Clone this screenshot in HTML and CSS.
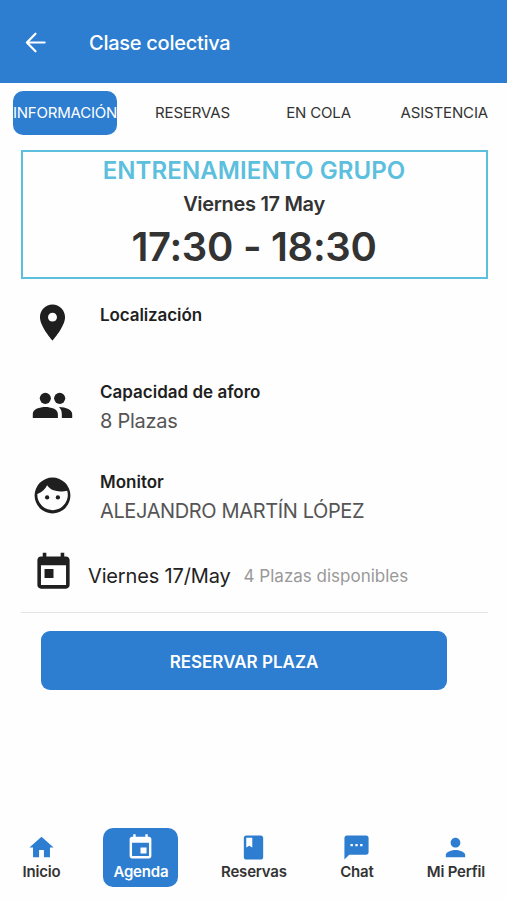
FILE: index.html
```html
<!DOCTYPE html>
<html lang="es">
<head>
<meta charset="utf-8">
<meta name="viewport" content="width=device-width, initial-scale=1">
<title>Clase colectiva</title>
<link rel="stylesheet" href="styles.css">
</head>
<body>
<header class="topbar">
  <svg class="back" viewBox="0 0 24 24"><path d="M21.500 12H3.500M12 2.800 3 12l9 9.200" /></svg>
  <h1 class="title">Clase colectiva</h1>
</header>
<nav class="tabs">
  <a class="tab tab-active"><span>INFORMACIÓN</span></a>
  <a class="tab"><span>RESERVAS</span></a>
  <a class="tab"><span>EN COLA</span></a>
  <a class="tab"><span>ASISTENCIA</span></a>
</nav>
<main class="content">
  <section class="session">
    <h2 class="name">ENTRENAMIENTO GRUPO</h2>
    <p class="date">Viernes 17 May</p>
    <p class="time">17:30 - 18:30</p>
  </section>
  <section class="row row-place">
    <svg class="icon" viewBox="0 0 24 24"><path d="M12 2C8.130 2 5 5.130 5 9c0 5.250 7 13 7 13s7-7.750 7-13c0-3.870-3.130-7-7-7zm0 9.500c-1.380 0-2.500-1.120-2.500-2.500s1.120-2.500 2.500-2.500 2.500 1.120 2.500 2.500-1.120 2.500-2.500 2.500z"/></svg>
    <div><h3 class="label">Localización</h3></div>
  </section>
  <section class="row row-capacity">
    <svg class="icon" viewBox="0 0 24 24"><circle cx="8" cy="8" r="3.100"/><circle cx="16" cy="8" r="3.100"/><path d="M1 19v-2.200C1 14 5 12.900 8 12.900s7 1.100 7 3.900V19zM15.600 12.800c4 .1 7.400 1.500 7.400 4V19h-5.800v-2c0-1.800-.4-3-1.600-4.200z"/></svg>
    <div><h3 class="label">Capacidad de aforo</h3><p class="value">8 Plazas</p></div>
  </section>
  <section class="row row-coach">
    <svg class="icon" viewBox="0 0 24 24"><path fill-rule="evenodd" d="M12 2a10 10 0 1 0 0 20 10 10 0 0 0 0-20zM9 6.300C10.600 8.800 13.500 9.700 16.500 9.700c1.300 0 2.800-.1 3.700-.4A8.500 8.500 0 1 1 3.550 11.200C6 10.200 8 8.500 9 6.300z"/><circle cx="9" cy="13.100" r="1.200"/><circle cx="15" cy="13.100" r="1.200"/></svg>
    <div><h3 class="label">Monitor</h3><p class="value coach-name">ALEJANDRO MARTÍN LÓPEZ</p></div>
  </section>
  <section class="day">
    <svg class="icon" viewBox="0 0 24 24"><path d="M19 3h-1V1h-2v2H8V1H6v2H5c-1.110 0-1.990.9-1.990 2L3 19c0 1.100.89 2 2 2h14c1.100 0 2-.9 2-2V5c0-1.100-.9-2-2-2zm0 16H5V8h14v11zM7 10h5v5H7z"/></svg>
    <span class="day-name">Viernes 17/May</span>
    <span class="free">4 Plazas disponibles</span>
  </section>
  <button class="reserve">RESERVAR PLAZA</button>
</main>
<footer class="bottom">
  <a class="item"><svg viewBox="0 0 24 24"><path d="M10 20v-6h4v6h5v-8h3L12 3 2 12h3v8z"/></svg><span>Inicio</span></a>
  <a class="item item-active"><svg viewBox="0 0 24 24"><path d="M17 12h-5v5h5v-5zM16 1v2H8V1H6v2H5c-1.110 0-1.990.9-1.990 2L3 19c0 1.100.89 2 2 2h14c1.100 0 2-.9 2-2V5c0-1.100-.9-2-2-2h-1V1h-2zm3 18H5V8h14v11z"/></svg><span>Agenda</span></a>
  <a class="item"><svg viewBox="0 0 24 24"><path d="M18 2H6c-1.100 0-2 .9-2 2v16c0 1.100.9 2 2 2h12c1.100 0 2-.9 2-2V4c0-1.100-.9-2-2-2zM6 4h5v8l-2.500-1.500L6 12V4z"/></svg><span>Reservas</span></a>
  <a class="item"><svg viewBox="0 0 24 24"><path d="M20 2H4c-1.100 0-1.990.9-1.990 2L2 22l4-4h14c1.100 0 2-.9 2-2V4c0-1.100-.9-2-2-2zM9 11H7V9h2v2zm4 0h-2V9h2v2zm4 0h-2V9h2v2z"/></svg><span>Chat</span></a>
  <a class="item"><svg viewBox="0 0 24 24"><path d="M12 12c2.210 0 4-1.790 4-4s-1.790-4-4-4-4 1.790-4 4 1.790 4 4 4zm0 2c-2.670 0-8 1.340-8 4v2h16v-2c0-2.660-5.330-4-8-4z"/></svg><span>Mi Perfil</span></a>
</footer>
</body>
</html>
```
FILE: styles.css
```css
* { box-sizing: border-box; margin: 0; padding: 0; }
body {
  height: 900px;
  display: flex;
  flex-direction: column;
  background: #fefefe;
  color: #333;
  font-family: Inter, "Liberation Sans", sans-serif;
  overflow: hidden;
}
span, h1, h2, p, button { white-space: nowrap; }

.topbar {
  height: 82.5px;
  flex: none;
  display: flex;
  align-items: center;
  padding: 3px 0 0 24px;
  background: #2d7dd0;
  color: #fff;
}
.back { width: 23px; height: 23px; margin-right: 42px; fill: none; stroke: #fff; stroke-width: 2.3; stroke-linecap: round; stroke-linejoin: round; }
.title { font-size: 20px; font-weight: 500; line-height: 24px; letter-spacing: -0.27px; }

.tabs {
  display: grid;
  grid-template-columns: 104px 151px 101px 150px;
  margin: 8.5px 0 0 13px;
  height: 44px;
  flex: none;
}
.tab { display: flex; align-items: center; justify-content: center; font-size: 15px; letter-spacing: -0.15px; color: #333; padding-bottom: 1px; }
.tab:last-child { justify-content: flex-start; padding-left: 31.5px; }
.tab-active { background: #2d7dd0; color: #fff; border-radius: 10px; letter-spacing: -0.22px; }

.content { flex: 1; padding: 15px 19.5px 0 20.5px; }
.session { height: 129px; border: 2px solid #5bbfdd; text-align: center; padding-top: 4px; }
.name { font-size: 24px; line-height: 30px; font-weight: 600; color: #5bbfdd; letter-spacing: 0.1px; }
.date { font-size: 20px; line-height: 26px; font-weight: 600; margin-top: 5px; letter-spacing: -0.32px; }
.time { font-size: 40px; line-height: 50px; font-weight: 600; margin-top: 5px; letter-spacing: -0.3px; }

.icon { width: 43px; height: 43px; flex: none; fill: #1f1f1f; }
.row { display: flex; padding-left: 10.5px; gap: 26px; }
.row-place { margin-top: 22px; height: 80px; }
.row-capacity { height: 90px; }
.row-capacity .icon { margin-top: 3px; }
.row-coach { height: 77px; }
.row-coach .icon { margin-top: 3px; }
.row-place .label { padding-top: 3px; letter-spacing: -0.1px; }
.label { font-size: 17px; line-height: 22px; font-weight: 600; color: #1f1f1f; }
.value { font-size: 20px; line-height: 26px; margin-top: 4.5px; font-weight: 400; color: #555; letter-spacing: -0.28px; }
.coach-name { letter-spacing: -0.37px; margin-top: 5px; }
.day { display: flex; align-items: center; height: 64.5px; border-bottom: 1px solid #e4e4e4; padding: 0 0 15px 11.5px; }
.day-name { font-size: 20px; letter-spacing: -0.15px; margin: 7px 0 0 13px; color: #222; }
.free { font-size: 17px; margin: 8px 0 0 13px; color: #999; }
.reserve {
  display: block;
  width: 406px;
  height: 59px;
  margin: 18.5px 0 0 20.5px;
  border: 0;
  border-radius: 9px;
  background: #2d7dd0;
  color: #fff;
  font: 600 17px Inter, sans-serif;
  padding-top: 3px;
}

.bottom {
  display: flex;
  height: 72px;
  flex: none;
  padding-left: 4px;
}
.item { width: 75px; height: 59px; display: flex; flex-direction: column; align-items: center; padding-top: 5px; font-size: 15px; line-height: 18px; font-weight: 600; letter-spacing: -0.2px; }
.item svg { width: 29px; height: 29px; fill: #2d7dd0; margin-bottom: 1px; }
.item-active { background: #2d7dd0; color: #fff; border-radius: 10px; margin: 0 38px 0 24.400px; }
.item-active svg { fill: #fff; }
.item:nth-child(4) { margin: 0 24px 0 28px; }
```
